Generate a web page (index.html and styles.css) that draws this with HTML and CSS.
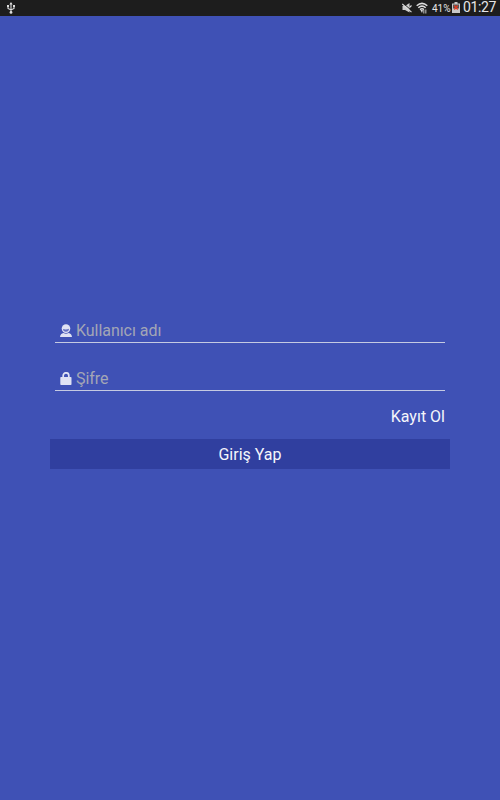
FILE: index.html
```html
<!DOCTYPE html>
<html lang="tr">
<head>
  <meta charset="UTF-8">
  <meta name="viewport" content="width=device-width, initial-scale=1.0">
  <title>Giriş Yap</title>
  <link rel="stylesheet" href="styles.css">
</head>
<body>

  <!-- Status bar -->
  <div class="status-bar">
    <svg class="usb" width="10" height="12" viewBox="0 0 10 12">
      <path d="M5 1v9M2 4v2.5L5 8l3-1.5V4" fill="none" stroke="#ddd" stroke-width="1.1"/>
      <path d="M5 0l1.6 2.4H3.4zM1 3h2v2H1zM7 3h2v2H7z" fill="#ddd"/>
      <circle cx="5" cy="10.4" r="1.4" fill="#ddd"/>
    </svg>
    <div class="status-right">
      <svg class="mute" width="10" height="10" viewBox="0 0 10 10">
        <path d="M.5 3H3l4.5-3v9.5L3 7H.5z" fill="#ccc"/>
        <path d="M1 0l9 8" stroke="#1d1d1d" stroke-width="1"/>
        <path d="M.3 1l9.2 8.2M7.5 4.5l2-2" stroke="#ddd" stroke-width="1.1"/>
      </svg>
      <svg class="wifi" width="12" height="12" viewBox="0 0 12 12">
        <path d="M.7 3.7Q6-.9 11.3 3.7M2.3 5.7Q6 2.5 9.7 5.7M4 7.6Q6 5.9 8 7.6" fill="none" stroke="#ddd" stroke-width="1.5"/>
        <path d="M4.5 8h2.4L6 11z" fill="#ddd"/>
        <path d="M7.8 11.5V8M9.8 7.5v4" stroke="#aaa" stroke-width="1.2"/>
      </svg>
      <span class="percent">41%</span>
      <svg class="battery" width="8" height="11" viewBox="0 0 8 11">
        <path d="M2.5 0h3v1.5H8V11H0V1.5h2.5z" fill="#c8c8c8"/>
        <path d="M1 2.5h6v4H1z" fill="#555"/>
        <path d="M2.3 3.5l3.4 4M5.7 3.5L2.3 7.5" stroke="#e43b22" stroke-width="1.3"/>
      </svg>
      <span class="clock">01:27</span>
    </div>
  </div>

  <!-- Login form -->
  <form class="login">
    <label class="field">
      <svg width="12" height="13" viewBox="0 0 12 13">
        <circle cx="6" cy="4.6" r="4.3" fill="#dfe2f4"/>
        <path d="M3 5Q6 6 9 4.8Q8.8 7.6 6 7.8Q3.2 7.6 3 5z" fill="#6572c4"/>
        <path d="M0 13Q.3 9.4 3.5 9Q6 10.4 8.5 9Q11.7 9.4 12 13z" fill="#dfe2f4"/>
      </svg>
      <input type="text" placeholder="Kullanıcı adı">
    </label>
    <label class="field">
      <svg width="12" height="13" viewBox="0 0 12 13">
        <path d="M3.2 6V3.6a2.8 2.8 0 0 1 5.6 0V6" fill="none" stroke="#dfe2f4" stroke-width="1.7"/>
        <rect x=".3" y="5" width="11.2" height="8" rx=".8" fill="#dfe2f4"/>
      </svg>
      <input type="password" placeholder="Şifre">
    </label>
    <a class="register">Kayıt Ol</a>
    <button type="button">Giriş Yap</button>
  </form>

</body>
</html>
```
FILE: styles.css
```css
* {
  box-sizing: border-box;
}
body {
  margin: 0;
  height: 100vh;
  overflow: hidden;
  background-color: #3f51b5;
  font-family: Roboto, sans-serif;
  color: #f5f6fb;
}
svg {
  display: block;
  flex: none;
}
.status-bar {
  display: flex;
  justify-content: space-between;
  align-items: center;
  height: 16px;
  padding: 0 4px 1px 6px;
  background-color: #1d1d1d;
  color: #e6e6e6;
}
.status-right {
  display: flex;
  align-items: center;
  height: 15px;
}
.wifi {
  margin-left: 4px;
}
.percent {
  margin-left: 4px;
  font-size: 10px;
  line-height: 15px;
  width: 19px;
  padding-top: 1px;
}
.battery {
  margin-left: 1px;
}
.clock {
  margin-left: 3px;
  width: 33px;
  font-size: 14px;
  letter-spacing: -0.4px;
  line-height: 15px;
}
.login {
  width: 400px;
  margin: 300px auto 0;
}
.field {
  display: flex;
  align-items: center;
  height: 27px;
  margin: 0 5px 21px;
  padding: 2px 5px 0;
  border-bottom: 1px solid #c5cae2;
}
.field + .field {
  margin-bottom: 15px;
}
input {
  flex: 1;
  min-width: 0;
  margin: 0 0 0 4px;
  padding: 0;
  border: none;
  outline: none;
  background: none;
  font-family: inherit;
  font-size: 16px;
  letter-spacing: -0.05px;
  color: #fff;
}
input::placeholder {
  color: #a3a6b5;
}
.register {
  display: block;
  margin: 0 5px 12px;
  font-size: 16px;
  line-height: 21px;
  text-align: right;
}
button {
  display: block;
  width: 100%;
  height: 30px;
  padding: 0;
  border: none;
  background-color: #303f9f;
  font-family: inherit;
  font-size: 16px;
  color: #f5f6fb;
}
```
